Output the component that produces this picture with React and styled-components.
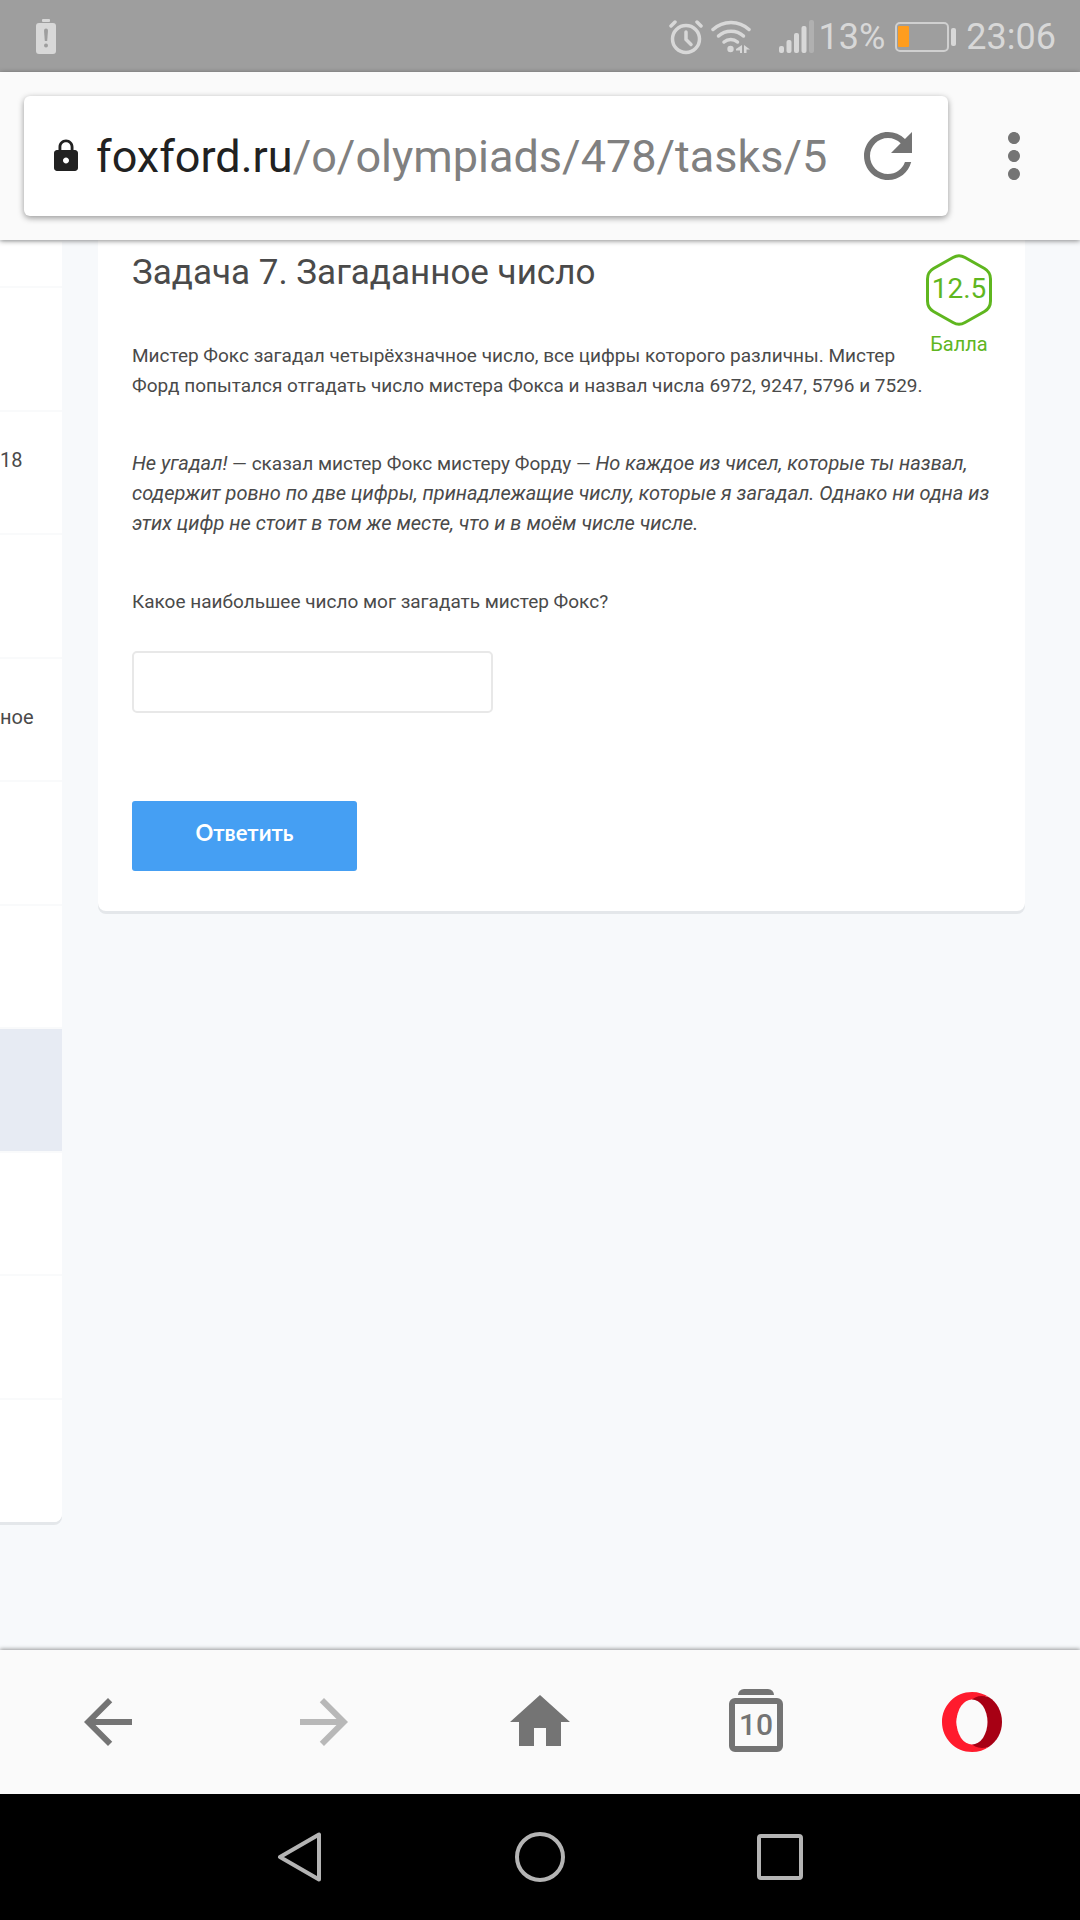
import styled, { createGlobalStyle } from "styled-components";
import {
  MdArrowBack,
  MdArrowForward,
  MdHome,
  MdLock,
  MdMoreVert,
  MdRefresh,
} from "react-icons/md";

const GlobalStyle = createGlobalStyle`
  * {
    box-sizing: border-box;
  }

  body {
    margin: 0;
    background: #f7f9fb;
    font-family: Roboto, "Noto Sans", sans-serif;
    color: #4a4a4a;
  }

  h1, p {
    margin: 0;
    font-weight: 400;
  }

  button {
    padding: 0;
    border: 0;
    background: none;
    font-family: inherit;
  }
`;

const tasks = [
  { id: 1, label: "" },
  { id: 2, label: "" },
  { id: 3, label: "18", twoLines: true },
  { id: 4, label: "" },
  { id: 5, label: "ное" },
  { id: 6, label: "" },
  { id: 7, label: "" },
  { id: 8, label: "", active: true },
  { id: 9, label: "" },
  { id: 10, label: "" },
  { id: 11, label: "" },
];

const BatteryAlert = () => (
  <svg width="20" height="36" viewBox="0 0 20 36" fill="#d8d8d8">
    <rect x="6" y="0" width="8" height="3" rx="1" />
    <rect x="0" y="4" width="20" height="31" rx="3" />
    <path d="M8 11.500a2 2 0 0 1 4 0l-.8 10.500h-2.400z" fill="#9e9e9e" />
    <circle cx="10" cy="26.500" r="2" fill="#9e9e9e" />
  </svg>
);

const Alarm = () => (
  <svg width="34" height="36" viewBox="0 0 34 36" fill="none" stroke="#d8d8d8" strokeLinecap="round" strokeLinejoin="round">
    <circle cx="17" cy="20" r="13.500" strokeWidth="3.500" />
    <path d="M17 13v7.500l5 5" strokeWidth="3.500" />
    <path d="M2 7l4-4M32 7l-4-4" strokeWidth="3.500" />
  </svg>
);

const Wifi = () => (
  <svg width="40" height="36" viewBox="0 0 40 36" fill="none" stroke="#d8d8d8" strokeWidth="3.500" strokeLinecap="round">
    <path d="M2 10.500c10-9.500 26-9.500 36 0" />
    <path d="M7.500 17c7-6.500 18-6.500 25 0" />
    <path d="M13 23c4-3.500 9.500-3.500 13.500 0" />
    <circle cx="19.500" cy="30" r="3.200" fill="#d8d8d8" stroke="none" />
    <path d="M31 26v8h-2v-2.500h-4v-1.500zM33 26l6 4.500h-3.500v3.500h-2.500z" fill="#d8d8d8" stroke="none" />
  </svg>
);

const Signal = () => (
  <svg width="35" height="36" viewBox="0 0 35 36" fill="#d8d8d8">
    <rect x="0" y="27" width="5" height="7" rx="2" />
    <rect x="7.500" y="21" width="5" height="13" rx="2" />
    <rect x="15" y="14" width="5" height="20" rx="2" />
    <rect x="22.500" y="7" width="5" height="27" rx="2" />
    <rect x="30" y="1" width="5" height="33" rx="2" fill="#b0b0b0" />
  </svg>
);

const Battery = () => (
  <svg width="61" height="30" viewBox="0 0 61 30">
    <rect x="1" y="1" width="52" height="28" rx="4" fill="none" stroke="#d0d0d0" strokeWidth="2" />
    <rect x="3" y="4" width="11" height="21" rx="1" fill="#ff9d1e" />
    <rect x="56" y="6" width="5" height="18" rx="2" fill="#d8d8d8" />
  </svg>
);

const OperaLogo = () => (
  <svg width="60" height="60" viewBox="0 0 60 60">
    <path d="M30 4c5-2 12-1 17 1.300C55 10.500 60 19.500 60 30s-5 19.500-13 24.700C42 57 35 58 30 56z" fill="#a70014" />
    <path
      d="M30 0C13.400 0 0 13.400 0 30s13.400 30 30 30c6.500 0 12.300-2 17-5.300-8 2.600-14.500 1-19.500-4.700C22 44.500 14.500 40 14.500 30S22 15.500 27.500 10c5-5.700 11.500-7.300 19.500-4.700C42.300 2 36.500 0 30 0z"
      fill="#ff1b2d"
    />
    <ellipse cx="30" cy="30" rx="15.500" ry="22.500" fill="#fafafa" />
  </svg>
);

const App = () => (
  <Screen>
    <GlobalStyle />
    <StatusBar>
      <BatteryAlert />
      <StatusIcons>
        <Alarm />
        <Wifi />
      </StatusIcons>
      <SignalLevel>
        <Signal />
        <StatusText>13%</StatusText>
      </SignalLevel>
      <Battery />
      <StatusText>23:06</StatusText>
    </StatusBar>

    <AddressBar>
      <AddressBox>
        <MdLock size={36} color="#212121" />
        <Url href="#task">
          <Host>foxford.ru</Host>/o/olympiads/478/tasks/5
        </Url>
        <IconButton aria-label="Обновить">
          <MdRefresh size={72} />
        </IconButton>
      </AddressBox>
      <IconButton aria-label="Меню">
        <MdMoreVert size={72} />
      </IconButton>
    </AddressBar>

    <Page>
      <TaskList>
        {tasks.map((task) => (
          <TaskRow key={task.id} $active={task.active} $twoLines={task.twoLines}>
            {task.label}
          </TaskRow>
        ))}
      </TaskList>

      <TaskCard id="task">
        <Score>
          <ScoreValue>
            <Hexagon viewBox="0 0 66 72">
              <path
                d="M27 3.500q6-3.500 12 0l19.500 11q6 3.500 6 10.500v22q0 7-6 10.500l-19.500 11q-6 3.500-12 0l-19.500-11q-6-3.500-6-10.500v-22q0-7 6-10.500z"
                fill="none"
                stroke="#5fb61f"
                strokeWidth="3"
              />
            </Hexagon>
            12.5
          </ScoreValue>
          <ScoreLabel>Балла</ScoreLabel>
        </Score>
        <Title>Задача 7. Загаданное число</Title>
        <Text>
          Мистер Фокс загадал четырёхзначное число, все цифры которого различны. Мистер Форд
          попытался отгадать число мистера Фокса и назвал числа 6972, 9247, 5796 и 7529.
        </Text>
        <Text>
          <Speech>Не угадал!</Speech> — сказал мистер Фокс мистеру Форду — <Speech>Но каждое из
          чисел, которые ты назвал, содержит ровно по две цифры, принадлежащие числу, которые я
          загадал. Однако ни одна из этих цифр не стоит в том же месте, что и в моём числе
          числе.</Speech>
        </Text>
        <Text as="label" htmlFor="answer">
          Какое наибольшее число мог загадать мистер Фокс?
        </Text>
        <Answer id="answer" type="text" />
        <Submit type="button">Ответить</Submit>
      </TaskCard>
    </Page>

    <BottomBar>
      <IconButton aria-label="Назад">
        <MdArrowBack size={72} />
      </IconButton>
      <IconButton aria-label="Вперёд" $muted>
        <MdArrowForward size={72} />
      </IconButton>
      <IconButton aria-label="Домой">
        <MdHome size={72} />
      </IconButton>
      <IconButton aria-label="Вкладки">
        <Tabs>
          <TabsLid />
          <TabsCount>10</TabsCount>
        </Tabs>
      </IconButton>
      <IconButton aria-label="Opera">
        <OperaLogo />
      </IconButton>
    </BottomBar>

    <SystemNav>
      <NavButton aria-label="Назад">
        <svg width="50" height="50" viewBox="0 0 50 50">
          <path d="M44 2.500v45L5 25z" />
        </svg>
      </NavButton>
      <NavButton aria-label="Главный экран">
        <svg width="50" height="50" viewBox="0 0 50 50">
          <circle cx="25" cy="25" r="23" />
        </svg>
      </NavButton>
      <NavButton aria-label="Недавние">
        <svg width="50" height="50" viewBox="0 0 50 50">
          <rect x="4" y="4" width="42" height="42" rx="2" />
        </svg>
      </NavButton>
    </SystemNav>
  </Screen>
);

export default App;

const Screen = styled.div`
  display: flex;
  flex-direction: column;
  width: 100%;
  min-height: 100vh;
  overflow: hidden;
`;

const StatusBar = styled.div`
  display: flex;
  align-items: center;
  height: 72px;
  padding: 2px 24px 0 36px;
  background: #9e9e9e;
  gap: 10px;
`;

const StatusIcons = styled.div`
  display: flex;
  gap: 8px;
  margin-left: auto;
  margin-right: 18px;
`;

const SignalLevel = styled.div`
  display: flex;
  align-items: center;
  gap: 5px;
`;

const StatusText = styled.span`
  font-size: 36px;
  line-height: 44px;
  color: #d8d8d8;
`;

const AddressBar = styled.header`
  position: relative;
  z-index: 1;
  display: flex;
  align-items: center;
  gap: 30px;
  height: 168px;
  padding: 0 30px 0 24px;
  background: #fafafa;
  box-shadow: 0 1px 5px rgba(0, 0, 0, 0.45);
`;

const AddressBox = styled.div`
  flex: 1;
  display: flex;
  align-items: center;
  height: 120px;
  padding: 0 24px;
  border-radius: 6px;
  background: #fff;
  box-shadow: 0 2px 6px rgba(0, 0, 0, 0.4);
`;

const Url = styled.a`
  flex: 1;
  margin-left: 12px;
  padding-top: 2px;
  font-size: 45px;
  line-height: 56px;
  white-space: nowrap;
  color: #808080;
  text-decoration: none;
`;

const Host = styled.span`
  color: #212121;
`;

const IconButton = styled.button`
  display: flex;
  align-items: center;
  justify-content: center;
  color: ${({ $muted }) => ($muted ? "#b8b8b8" : "#747474")};
`;

const Page = styled.main`
  flex: 1;
  display: flex;
  align-items: flex-start;
  gap: 36px;
  padding-right: 55px;
  background: #f7f9fb;
`;

const TaskList = styled.div`
  width: 62px;
  border-radius: 0 0 8px 0;
  background: #fff;
  box-shadow: 0 3px 0 #e4e7ea;
  overflow: hidden;
`;

const TaskRow = styled.div`
  display: flex;
  align-items: center;
  height: 123px;
  padding-bottom: ${({ $twoLines }) => ($twoLines ? "26px" : "6px")};
  border-top: 2px solid #f9fafb;
  font-size: 20px;
  line-height: 24px;
  background: ${({ $active }) => ($active ? "#e7ebf3" : "#fff")};

  &:nth-child(even) {
    height: 124px;
  }

  &:first-child {
    height: 46px;
  }

  &:last-child {
    height: 124px;
  }
`;

const TaskCard = styled.section`
  flex: 1;
  padding: 13px 28px 40px 34px;
  border-radius: 0 0 8px 8px;
  background: #fff;
  box-shadow: 0 3px 0 #e4e7ea;
`;

const Title = styled.h1`
  font-size: 35px;
  line-height: 40px;
`;

const Text = styled.p`
  display: block;
  margin-top: 48px;
  font-size: 19px;
  line-height: 30px;
`;

// shorter line box, so the larger italics keep the paragraph's 30px rhythm
const Speech = styled.em`
  font-size: 20px;
  line-height: 28px;
`;

const Score = styled.div`
  float: right;
  width: 66px;
  margin: 1px 5px 0 16px;
  color: #5fb61f;
  text-align: center;
`;

const ScoreValue = styled.div`
  position: relative;
  height: 72px;
  font-size: 28px;
  line-height: 70px;
`;

const Hexagon = styled.svg`
  position: absolute;
  inset: 0;
`;

const ScoreLabel = styled.div`
  margin-top: 6px;
  font-size: 20px;
  line-height: 24px;
`;

const Answer = styled.input`
  display: block;
  width: 361px;
  height: 62px;
  margin-top: 34px;
  padding: 0 16px;
  border: 2px solid #e8e8e8;
  border-radius: 5px;
  background: #fff;
  font-size: 20px;
`;

const Submit = styled.button`
  && {
    display: block;
    width: 225px;
    height: 70px;
    margin-top: 88px;
    padding-bottom: 8px;
    border-radius: 3px;
    background: #459ff3;
    font-family: Lato, "Open Sans", sans-serif;
    font-size: 22px;
    font-weight: 700;
    color: #fff;
  }
`;

const BottomBar = styled.nav`
  position: relative;
  z-index: 1;
  display: grid;
  grid-template-columns: repeat(5, 1fr);
  height: 144px;
  background: #fafafa;
  box-shadow: 0 -1px 4px rgba(0, 0, 0, 0.4);
`;

const Tabs = styled.span`
  display: flex;
  flex-direction: column;
  align-items: center;
  gap: 3px;
  padding-bottom: 3px;
`;

const TabsLid = styled.span`
  width: 36px;
  height: 6px;
  border-radius: 6px 6px 0 0;
  background: #747474;
`;

const TabsCount = styled.span`
  width: 54px;
  height: 54px;
  border: 6px solid #747474;
  border-radius: 6px;
  font-size: 30px;
  font-weight: 500;
  line-height: 42px;
`;

const SystemNav = styled.nav`
  display: flex;
  justify-content: center;
  height: 126px;
  background: #000;
`;

const NavButton = styled.button`
  display: flex;
  align-items: center;
  justify-content: center;
  width: 240px;

  svg {
    fill: none;
    stroke: #b4b4b4;
    stroke-width: 4px;
    stroke-linejoin: round;
  }
`;
